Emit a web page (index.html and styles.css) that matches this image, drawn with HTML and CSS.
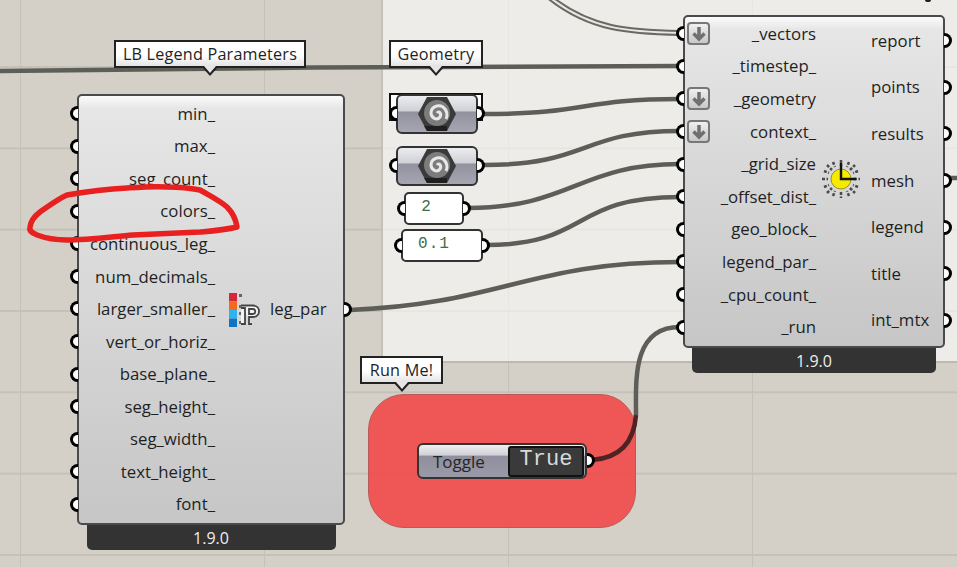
FILE: index.html
```html
<!DOCTYPE html>
<html lang="en">
<head>
<meta charset="utf-8">
<title>Grasshopper canvas</title>
<link rel="stylesheet" href="styles.css">
</head>
<body>
<main class="canvas">
  <div class="light-region"></div>
  <div class="red-group"></div>

  <svg class="wires" width="957" height="567" viewBox="0 0 957 567">
    <g fill="none" stroke="#5e5e58" stroke-width="4.5">
      <path d="M0 71 C200 68 500 66 680 66"/>
      <path d="M350 310 C500 304 530 262 680 262"/>
      <path d="M484 114 C590 114 580 99 680 99"/>
      <path d="M484 165 C590 165 580 131 680 131"/>
      <path d="M468 208 C570 208 580 164 680 164"/>
      <path d="M486 245 C590 245 570 197 680 197"/>
      <path d="M636 415 C636 380 632 327 680 327"/>
      <path d="M946 178 L957 178"/>
    </g>
    <path d="M592 460 C620 458 634 442 636 415" fill="none" stroke="#4f2323" stroke-width="4.5"/>
    <path d="M548 -4 C590 30 630 32 680 33" fill="none" stroke="#6a6a64" stroke-width="6"/>
    <path d="M548 -4 C590 30 630 32 680 33" fill="none" stroke="#e9e8e4" stroke-width="2"/>
    <ellipse cx="928" cy="0" rx="3" ry="2" fill="#222"/>
  </svg>

  <!-- LB Legend Parameters -->
  <div class="tag tag-legend">LB Legend Parameters</div>
  <section class="node node-legend">
    <div class="node-body">
      <div class="inputs">
        <div class="row"><i class="port"></i>min_</div>
        <div class="row"><i class="port"></i>max_</div>
        <div class="row"><i class="port"></i>seg_count_</div>
        <div class="row"><i class="port"></i>colors_</div>
        <div class="row"><i class="port"></i>continuous_leg_</div>
        <div class="row"><i class="port"></i>num_decimals_</div>
        <div class="row"><i class="port"></i>larger_smaller_</div>
        <div class="row"><i class="port"></i>vert_or_horiz_</div>
        <div class="row"><i class="port"></i>base_plane_</div>
        <div class="row"><i class="port"></i>seg_height_</div>
        <div class="row"><i class="port"></i>seg_width_</div>
        <div class="row"><i class="port"></i>text_height_</div>
        <div class="row"><i class="port"></i>font_</div>
      </div>
      <div class="icon-col">
        <svg class="legend-icon" width="36" height="36" viewBox="0 0 36 36">
          <rect x="1" y="1" width="8" height="8.5" fill="#d6263c"/>
          <rect x="1" y="9.5" width="8" height="8.5" fill="#f2691f"/>
          <rect x="1" y="18" width="8" height="8.5" fill="#2bb5ef"/>
          <rect x="1" y="26.5" width="8" height="8.5" fill="#0f75c2"/>
          <path d="M11 2h3v3h-3zM11 13h3v3h-3zM11 20h3v3h-3zM11 29h3v3h-3z" fill="#666"/>
          <path d="M13 13.500 H25 C33 13.500 33 25 25 25 H21 V32 H24 M13 32 H17 V16 H13 M21 17 H25 C28 17 28 22 25 22 H21 Z" fill="#f2f2f2" stroke="#444" stroke-width="1.800"/>
        </svg>
      </div>
      <div class="outputs">
        <div class="row"><i class="port"></i>leg_par</div>
      </div>
    </div>
    <div class="node-footer">1.9.0</div>
  </section>

  <!-- Geometry params -->
  <div class="tag tag-geometry">Geometry</div>
  <div class="selection-box"></div>
  <div class="capsule capsule-a">
    <i class="port port-l"></i><i class="port port-r"></i>
    <svg class="hex" width="40" height="36" viewBox="0 0 40 36">
      <path d="M10 1 H30 L39 18 L30 35 H10 L1 18 Z" fill="#3a3a3a"/>
      <path d="M10 30 H30 L30 35 H10 L7 30 Z" fill="#1f1f1f"/>
      <circle cx="20" cy="17" r="13" fill="#7c7c7c"/>
      <path d="M20 17 C22 14 25 18 23 21 C20 25 14 22 14 17 C14 11 21 8 26 11 C30 14 31 19 29 23" fill="none" stroke="#e8e8e8" stroke-width="3"/>
    </svg>
  </div>
  <div class="capsule capsule-b">
    <i class="port port-l"></i><i class="port port-r"></i>
    <svg class="hex" width="40" height="36" viewBox="0 0 40 36">
      <path d="M10 1 H30 L39 18 L30 35 H10 L1 18 Z" fill="#3a3a3a"/>
      <path d="M10 30 H30 L30 35 H10 L7 30 Z" fill="#1f1f1f"/>
      <circle cx="20" cy="17" r="13" fill="#7c7c7c"/>
      <path d="M20 17 C22 14 25 18 23 21 C20 25 14 22 14 17 C14 11 21 8 26 11 C30 14 31 19 29 23" fill="none" stroke="#e8e8e8" stroke-width="3"/>
    </svg>
  </div>
  <div class="panel panel-a"><i class="port port-l"></i><i class="port port-r"></i>2</div>
  <div class="panel panel-b"><i class="port port-l"></i><i class="port port-r"></i>0.1</div>

  <!-- Main component -->
  <section class="node node-main">
    <div class="node-body">
      <div class="inputs">
        <div class="row"><i class="port"></i><b class="arrow-btn"><svg width="18" height="18" viewBox="0 0 18 18"><path d="M9 2V14M3.500 8.500L9 14L14.500 8.500" fill="none" stroke="#707070" stroke-width="3.500"/></svg></b>_vectors</div>
        <div class="row"><i class="port"></i>_timestep_</div>
        <div class="row"><i class="port"></i><b class="arrow-btn"><svg width="18" height="18" viewBox="0 0 18 18"><path d="M9 2V14M3.500 8.500L9 14L14.500 8.500" fill="none" stroke="#707070" stroke-width="3.500"/></svg></b>_geometry</div>
        <div class="row"><i class="port"></i><b class="arrow-btn"><svg width="18" height="18" viewBox="0 0 18 18"><path d="M9 2V14M3.500 8.500L9 14L14.500 8.500" fill="none" stroke="#707070" stroke-width="3.500"/></svg></b>context_</div>
        <div class="row"><i class="port"></i>_grid_size</div>
        <div class="row"><i class="port"></i>_offset_dist_</div>
        <div class="row"><i class="port"></i>geo_block_</div>
        <div class="row"><i class="port"></i>legend_par_</div>
        <div class="row"><i class="port"></i>_cpu_count_</div>
        <div class="row"><i class="port"></i>_run</div>
      </div>
      <div class="icon-col">
        <svg class="clock-icon" width="38" height="38" viewBox="0 0 38 38">
          <g stroke="#4a4a4a" stroke-width="2.500" stroke-dasharray="3 1.500">
            <path d="M19 0V6M19 32V38M0 19H6M32 19H38M5 5L10 10M28 28L33 33M5 33L10 28M28 10L33 5M11 2L13 7M27 2L25 7M11 36L13 31M27 36L25 31M2 11L7 13M2 27L7 25M36 11L31 13M36 27L31 25"/>
          </g>
          <circle cx="19" cy="19" r="10" fill="#f5ea00" stroke="#8a8400" stroke-width="0.800"/>
          <path d="M19 3V19H34" fill="none" stroke="#111" stroke-width="2.400"/>
        </svg>
      </div>
      <div class="outputs">
        <div class="row"><i class="port"></i>report</div>
        <div class="row"><i class="port"></i>points</div>
        <div class="row"><i class="port"></i>results</div>
        <div class="row"><i class="port"></i>mesh</div>
        <div class="row"><i class="port"></i>legend</div>
        <div class="row"><i class="port"></i>title</div>
        <div class="row"><i class="port"></i>int_mtx</div>
      </div>
    </div>
    <div class="node-footer">1.9.0</div>
  </section>

  <!-- Toggle -->
  <div class="tag tag-run">Run Me!</div>
  <div class="toggle">
    <span class="toggle-label">Toggle</span>
    <span class="toggle-value">True</span>
    <i class="port port-r port-toggle"></i>
  </div>

  <svg class="scribble" width="957" height="567" viewBox="0 0 957 567">
    <path d="M30 227 C31 220 36 215 40 212 C50 205 58 199 67 195 C90 191 108 189 127 188 C142 187 155 186 167 187 C180 187 190 188 200 190 C212 197 220 201 227 207 C233 213 236 220 237 227 C225 230 212 231 200 232 C178 233 155 234 133 235 C110 237 88 240 67 240 C55 240 45 238 37 235 C32 233 29 230 30 227 Z" fill="none" stroke="#e8201f" stroke-width="5.500" stroke-linejoin="round"/>
  </svg>
</main>
</body>
</html>
```

FILE: styles.css
```css
* { box-sizing: border-box; }

html, body {
  margin: 0;
  padding: 0;
  width: 957px;
  height: 567px;
  overflow: hidden;
}

.canvas {
  position: relative;
  width: 957px;
  height: 567px;
  overflow: hidden;
  background-color: #d4d0c8;
  background-image:
    linear-gradient(90deg, #c4c1b9 2px, transparent 2px),
    linear-gradient(180deg, #c4c1b9 2px, transparent 2px);
  background-size: 244px 81.33px;
  background-position: 19px 66px;
  font-family: "Open Sans", "Noto Sans", sans-serif;
  font-size: 16.8px;
  color: #1f1f1f;
}

.light-region {
  position: absolute;
  left: 381px;
  top: 0;
  width: 576px;
  height: 363px;
  background: rgba(255, 255, 255, 0.6);
  border-left: 2px solid #c4c1b9;
  border-bottom: 2px solid #bcb9b1;
}

.red-group {
  position: absolute;
  left: 368px;
  top: 394px;
  width: 268px;
  height: 134px;
  border-radius: 36px;
  background: rgba(241, 76, 76, 0.92);
  border: 1px solid #b85a58;
}

.wires, .scribble {
  position: absolute;
  left: 0;
  top: 0;
  pointer-events: none;
}

/* text balloons */
.tag {
  position: absolute;
  height: 28px;
  display: flex;
  align-items: center;
  justify-content: center;
  background: linear-gradient(180deg, #ffffff 55%, #e4e4e4 100%);
  border: 2px solid #222;
  font-size: 16.2px;
  letter-spacing: 0.2px;
  white-space: nowrap;
}
.tag::before {
  content: "";
  position: absolute;
  left: 50%;
  top: 100%;
  margin-left: -9px;
  border-left: 9px solid transparent;
  border-right: 9px solid transparent;
  border-top: 10px solid #222;
}
.tag::after {
  content: "";
  position: absolute;
  left: 50%;
  top: 100%;
  margin-left: -6px;
  border-left: 6px solid transparent;
  border-right: 6px solid transparent;
  border-top: 7px solid #e6e6e6;
}
.tag-legend { left: 114px; top: 40px; width: 192px; }
.tag-geometry { left: 389px; top: 40px; width: 94px; }
.tag-run { left: 360px; top: 356px; width: 83px; }

/* components */
.node {
  position: absolute;
  display: flex;
  flex-direction: column;
  align-items: center;
}
.node-legend { left: 77px; top: 94px; width: 268px; height: 456px; }
.node-main { left: 683px; top: 15px; width: 262px; height: 358px; }

.node-body {
  flex: 1;
  width: 100%;
  display: flex;
  padding: 2px 0;
  border: 2px solid #4a4a4a;
  border-radius: 5px;
  background:
    linear-gradient(180deg, #fbfbfb 0, #e7e7e7 12px, #e6e6e6 13px, #c6c6c6 100%);
}
.node-main .node-body { padding: 1px 0 2px; }

.node-footer {
  height: 25px;
  flex: none;
  display: flex;
  align-items: center;
  justify-content: center;
  background: #333;
  color: #eee;
  border-radius: 0 0 5px 5px;
  font-size: 16px;
}
.node-legend .node-footer { width: 249px; }
.node-main .node-footer { width: 244px; }

.inputs, .outputs {
  display: grid;
  grid-auto-rows: 1fr;
}
.inputs .row { justify-content: flex-end; }
.node-legend .inputs { width: 136px; }
.node-main .inputs { width: 131px; }
.icon-col {
  width: 55px;
  display: flex;
  align-items: center;
  justify-content: center;
}
.outputs { flex: 1; }

.row {
  position: relative;
  display: flex;
  align-items: center;
  white-space: nowrap;
  line-height: 1;
}

/* parameter grips */
.port {
  position: absolute;
  top: 50%;
  width: 8px;
  height: 15px;
  margin-top: -8px;
  background: #fff;
  border: 3.5px solid #000;
}
.inputs .port, .port-l {
  left: -9px;
  border-right: 0;
  border-radius: 8px 0 0 8px;
}
.outputs .port, .port-r {
  right: -9px;
  border-left: 0;
  border-radius: 0 8px 8px 0;
}

.arrow-btn {
  position: absolute;
  left: 2px;
  top: 50%;
  width: 23px;
  height: 23px;
  margin-top: -12px;
  display: flex;
  align-items: center;
  justify-content: center;
  border: 2px solid #777;
  border-radius: 4px;
  background: linear-gradient(180deg, #f0f0f0 0, #c8c8c8 100%);
}

.legend-icon { transform: translateX(3px); }
.clock-icon { transform: translate(-3px, -2px); }

/* geometry parameters */
.selection-box {
  position: absolute;
  left: 389px;
  top: 93px;
  width: 94px;
  height: 28px;
  background: #fff;
  border: 2px solid #111;
}

.capsule {
  position: absolute;
  width: 82px;
  height: 40px;
  display: flex;
  align-items: center;
  justify-content: center;
  border: 2px solid #333;
  border-radius: 6px;
  background: linear-gradient(180deg, #ecedf0 0, #cfcfd6 42%, #92929f 44%, #a6a6b2 100%);
}
.capsule-a { left: 396px; top: 94px; }
.capsule-b { left: 396px; top: 146px; }

.panel {
  position: absolute;
  height: 33px;
  padding-bottom: 3px;
  display: flex;
  align-items: center;
  justify-content: center;
  background: #fff;
  border: 2px solid #333;
  border-radius: 5px;
  font-family: "Liberation Mono", monospace;
  font-size: 16px;
  letter-spacing: 1px;
  color: #3a7047;
}
.panel-a { left: 404px; top: 192px; width: 60px; padding-right: 15px; }
.panel-b { left: 401px; top: 229px; width: 82px; padding-right: 16px; }

/* toggle */
.toggle {
  position: absolute;
  left: 417px;
  top: 443px;
  width: 170px;
  height: 36px;
  display: flex;
  align-items: center;
  padding-left: 14px;
  border: 2px solid #333;
  border-radius: 6px;
  background: linear-gradient(180deg, #f0f0f2 0, #cfcfd6 32%, #8e8e9c 34%, #9a9aa8 100%);
}
.toggle-label {
  flex: 1;
  color: #262626;
  font-size: 17px;
}
.toggle-value {
  width: 76px;
  height: 31px;
  margin-right: 1px;
  display: flex;
  align-items: center;
  justify-content: center;
  padding-bottom: 3px;
  background: #3a3a3a;
  border: 2px solid #111;
  border-radius: 3px;
  color: #d8d8d8;
  font-family: "Liberation Mono", monospace;
  font-size: 22px;
}
.port-toggle { right: -10px; }
```
